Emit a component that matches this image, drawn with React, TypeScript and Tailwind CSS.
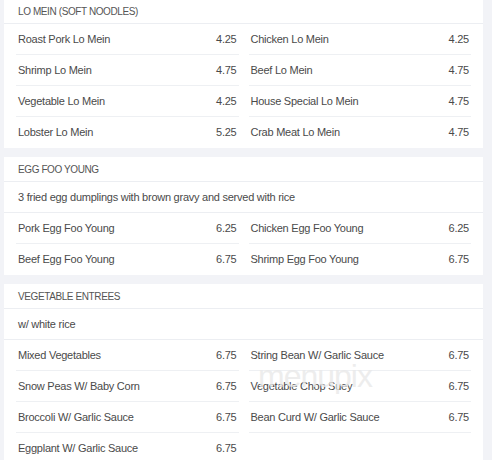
import React from 'react';

type Item = { name: string; price: string };
type Section = { title: string; note?: string; items: Item[] };

const SECTIONS: Section[] = [
  {
    title: 'Lo Mein (Soft Noodles)',
    items: [
      { name: 'Roast Pork Lo Mein', price: '4.25' },
      { name: 'Chicken Lo Mein', price: '4.25' },
      { name: 'Shrimp Lo Mein', price: '4.75' },
      { name: 'Beef Lo Mein', price: '4.75' },
      { name: 'Vegetable Lo Mein', price: '4.25' },
      { name: 'House Special Lo Mein', price: '4.75' },
      { name: 'Lobster Lo Mein', price: '5.25' },
      { name: 'Crab Meat Lo Mein', price: '4.75' },
    ],
  },
  {
    title: 'Egg Foo Young',
    note: '3 fried egg dumplings with brown gravy and served with rice',
    items: [
      { name: 'Pork Egg Foo Young', price: '6.25' },
      { name: 'Chicken Egg Foo Young', price: '6.25' },
      { name: 'Beef Egg Foo Young', price: '6.75' },
      { name: 'Shrimp Egg Foo Young', price: '6.75' },
    ],
  },
  {
    title: 'Vegetable Entrees',
    note: 'w/ white rice',
    items: [
      { name: 'Mixed Vegetables', price: '6.75' },
      { name: 'String Bean W/ Garlic Sauce', price: '6.75' },
      { name: 'Snow Peas W/ Baby Corn', price: '6.75' },
      { name: 'Vegetable Chop Suey', price: '6.75' },
      { name: 'Broccoli W/ Garlic Sauce', price: '6.75' },
      { name: 'Bean Curd W/ Garlic Sauce', price: '6.75' },
      { name: 'Eggplant W/ Garlic Sauce', price: '6.75' },
    ],
  },
];

function MenuSection({ section, first }: { section: Section; first?: boolean }) {
  const rows = Math.ceil(section.items.length / 2);
  return (
    <div className={first ? 'bg-white' : 'bg-white mt-[9px]'}>
      {/* Section header */}
      <div className={`${first ? 'h-[24px]' : 'h-[25px]'} flex items-center px-[14px] border-b border-[#eceef2] text-[10px] tracking-[-0.4px] uppercase text-[#555]`}>
        {section.title}
      </div>

      {section.note && (
        <div className="h-[31px] flex items-center px-[14px] border-b border-[#eceef2] text-[11px] tracking-[-0.25px] text-[#4a4a4a]">
          {section.note}
        </div>
      )}

      {/* Items, two columns */}
      <div className="grid grid-cols-2 gap-x-[10px] px-[12px]">
        {section.items.map((item, i) => {
          const isLastRow = Math.floor(i / 2) === rows - 1;
          return (
            <div
              key={item.name}
              className={`h-[31px] flex items-center justify-between px-[2px] text-[11px] tracking-[-0.25px] text-[#4a4a4a] ${isLastRow ? '' : 'border-b border-[#eef0f3]'}`}
            >
              <span>{item.name}</span>
              <span>{item.price}</span>
            </div>
          );
        })}
      </div>
    </div>
  );
}

export default function App() {
  return (
    <div
      className="relative w-[492px] h-[460px] overflow-hidden bg-[#f2f3f7]"
      style={{ fontFamily: '"Liberation Sans", Arial, sans-serif' }}
    >
      <div className="ml-[4px] w-[479px] flex flex-col">
        {SECTIONS.map((s, i) => (
          <MenuSection key={s.title} section={s} first={i === 0} />
        ))}
      </div>

      {/* watermark */}
      <div className="absolute left-[258px] top-[360px] text-[32px] leading-none tracking-[-1px] text-[#e9e9e9]/80 pointer-events-none select-none">
        menupix
      </div>
    </div>
  );
}
